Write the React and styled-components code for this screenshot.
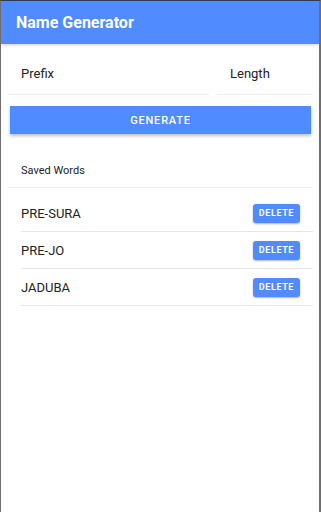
import React, { useState } from "react";
import styled, { createGlobalStyle } from "styled-components";

const GlobalStyle = createGlobalStyle`
  html, body {
    margin: 0;
    padding: 0;
    background: #fff;
    font-family: Roboto, "Liberation Sans", sans-serif;
  }
`;

const Screen = styled.div`
  width: 321px;
  height: 512px;
  box-sizing: border-box;
  border-left: 1px solid #6e6e6e;
  border-right: 2px solid #6e6e6e;
  border-top: 1px solid #2f3b55;
  background: #fff;
  overflow: hidden;
`;

const Header = styled.header`
  height: 43px;
  background: #508cff;
  display: flex;
  align-items: center;
  padding-left: 15px;
  box-shadow: 0 1px 3px rgba(0, 0, 0, 0.2);
  color: #fff;
  font-size: 16px;
  font-weight: 700;
`;

const Form = styled.div`
  padding: 0 6px 0 7px;
`;

const InputRow = styled.div`
  display: flex;
  gap: 8px;
  margin-top: 9px;
`;

const Field = styled.input`
  flex: ${p => (p.$width ? `0 0 ${p.$width}px` : "1")};
  min-width: 0;
  height: 42px;
  box-sizing: border-box;
  border: none;
  border-bottom: 1px solid #ececec;
  padding: 0 12px 0 13px;
  font-family: inherit;
  font-size: 13px;
  color: #222;
  outline: none;
  background: transparent;
  &::placeholder {
    color: #222;
  }
`;

const GenerateButton = styled.button`
  display: block;
  width: calc(100% - 4px);
  margin: 11px 2px 0;
  height: 28px;
  border: none;
  background: #508cff;
  color: #fff;
  font-family: inherit;
  font-size: 11px;
  font-weight: 500;
  letter-spacing: 0.8px;
  box-shadow: 0 2px 3px rgba(0, 0, 0, 0.25);
  cursor: pointer;
`;

const SectionTitle = styled.div`
  margin: 0 6px 0 7px;
  padding: 30px 0 10px 13px;
  font-size: 11px;
  color: #222;
  border-bottom: 1px solid #efefef;
`;

const List = styled.ul`
  list-style: none;
  margin: 0;
  padding: 7px 6px 0 20px;
`;

const Item = styled.li`
  display: flex;
  align-items: center;
  justify-content: space-between;
  height: 36px;
  border-bottom: 1px solid #e6e6e6;
  padding-right: 13px;
  font-size: 13px;
  color: #222;
`;

const DeleteButton = styled.button`
  height: 19px;
  padding: 0 6px;
  border: none;
  border-radius: 3px;
  background: #508cff;
  color: #fff;
  font-family: inherit;
  font-size: 9px;
  font-weight: 700;
  letter-spacing: 0.6px;
  box-shadow: 0 1px 2px rgba(0, 0, 0, 0.3);
  cursor: pointer;
`;

export default function App() {
  const [words, setWords] = useState(["PRE-SURA", "PRE-JO", "JADUBA"]);

  return (
    <Screen>
      <GlobalStyle />
      <Header>Name Generator</Header>
      <Form>
        <InputRow>
          <Field placeholder="Prefix" />
          <Field $width={96} placeholder="Length" />
        </InputRow>
        <GenerateButton>GENERATE</GenerateButton>
      </Form>
      <SectionTitle>Saved Words</SectionTitle>
      <List>
        {words.map((w, i) => (
          <Item key={w}>
            {w}
            <DeleteButton onClick={() => setWords(words.filter((_, j) => j !== i))}>
              DELETE
            </DeleteButton>
          </Item>
        ))}
      </List>
    </Screen>
  );
}
